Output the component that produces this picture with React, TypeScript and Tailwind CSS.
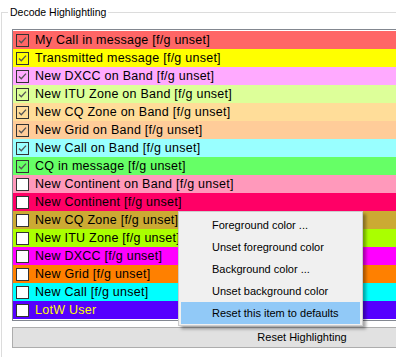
import { useState } from "react";

type Item = { label: string; bg: string; fg?: string; checked: boolean };

const items: Item[] = [
    { label: "My Call in message [f/g unset]", bg: "bg-[#ff6666]", checked: true },
    { label: "Transmitted message [f/g unset]", bg: "bg-[#ffff00]", checked: true },
    { label: "New DXCC on Band [f/g unset]", bg: "bg-[#ffaaff]", checked: true },
    { label: "New ITU Zone on Band [f/g unset]", bg: "bg-[#ddff99]", checked: true },
    { label: "New CQ Zone on Band [f/g unset]", bg: "bg-[#ffdd99]", checked: true },
    { label: "New Grid on Band [f/g unset]", bg: "bg-[#ffcc99]", checked: true },
    { label: "New Call on Band [f/g unset]", bg: "bg-[#99ffff]", checked: true },
    { label: "CQ in message [f/g unset]", bg: "bg-[#66ff66]", checked: true },
    { label: "New Continent on Band [f/g unset]", bg: "bg-[#ff99bb]", checked: false },
    { label: "New Continent [f/g unset]", bg: "bg-[#ff0066]", checked: false },
    { label: "New CQ Zone [f/g unset]", bg: "bg-[#ccaa33]", checked: false },
    { label: "New ITU Zone [f/g unset]", bg: "bg-[#aaff00]", checked: false },
    { label: "New DXCC [f/g unset]", bg: "bg-[#ff00ff]", checked: false },
    { label: "New Grid [f/g unset]", bg: "bg-[#ff8000]", checked: false },
    { label: "New Call [f/g unset]", bg: "bg-[#00ffff]", checked: false },
    { label: "LotW User", bg: "bg-[#5500ff]", fg: "text-[#ffff00]", checked: false },
];

const menu = [
    "Foreground color ...",
    "Unset foreground color",
    "Background color ...",
    "Unset background color",
    "Reset this item to defaults",
];

function CheckBox({ checked }: { checked: boolean }) {
    return (
        <div className={`h-[13px] w-[13px] shrink-0 border border-[#333333] ${checked ? "" : "bg-white"}`}>
            {checked && (
                <svg width="11" height="11" viewBox="0 0 11 11">
                    <path d="M2 5.5 L4.3 7.8 L9 2.6" fill="none" stroke="#555555" strokeWidth="1.3" />
                </svg>
            )}
        </div>
    );
}

export default function App() {
    const [hover] = useState(4);

    return (
        <div className="relative h-[357px] w-[396px] overflow-hidden bg-white text-black font-['Liberation_Sans',Arial,sans-serif]">
            <div className="w-[620px] pt-[12px] pl-[1px]">
                {/* group box */}
                <div className="relative h-[360px] w-[600px] border-l border-t border-[#dcdcdc] pl-[10px] pt-[16px]">
                    <span className="absolute -top-[9px] left-[6px] bg-white px-[2px] text-[10.5px] leading-[16px]">
                        Decode Highlightling
                    </span>

                    <div className="w-[580px] border border-[#828790] bg-white pt-[1px] pb-[1px]">
                        {items.map((it) => (
                            <div key={it.label} className={`flex h-[18px] items-center gap-[6px] pl-[3px] ${it.bg}`}>
                                <CheckBox checked={it.checked} />
                                <span className={`whitespace-nowrap text-[12.5px] leading-[18px] tracking-[0.25px] ${it.fg ?? "text-black"}`}>
                                    {it.label}
                                </span>
                            </div>
                        ))}
                    </div>

                    <button className="mt-[6px] flex h-[21px] w-[580px] items-center justify-center border border-[#adadad] bg-[#e1e1e1] text-[11px]">
                        Reset Highlighting
                    </button>
                </div>
            </div>

            {/* context menu */}
            <div className="absolute left-[178px] top-[211px] w-[185px] border border-[#cccccc] bg-[#f0f0f0] pt-[2px] pb-[1px] shadow-[3px_3px_3px_rgba(0,0,0,0.35)]">
                {menu.map((m, i) => (
                    <div
                        key={m}
                        className={`mx-[2px] flex h-[22px] items-center pl-[31px] text-[11px] ${i === hover ? "bg-[#91c9f7]" : ""}`}
                    >
                        {m}
                    </div>
                ))}
            </div>
        </div>
    );
}
